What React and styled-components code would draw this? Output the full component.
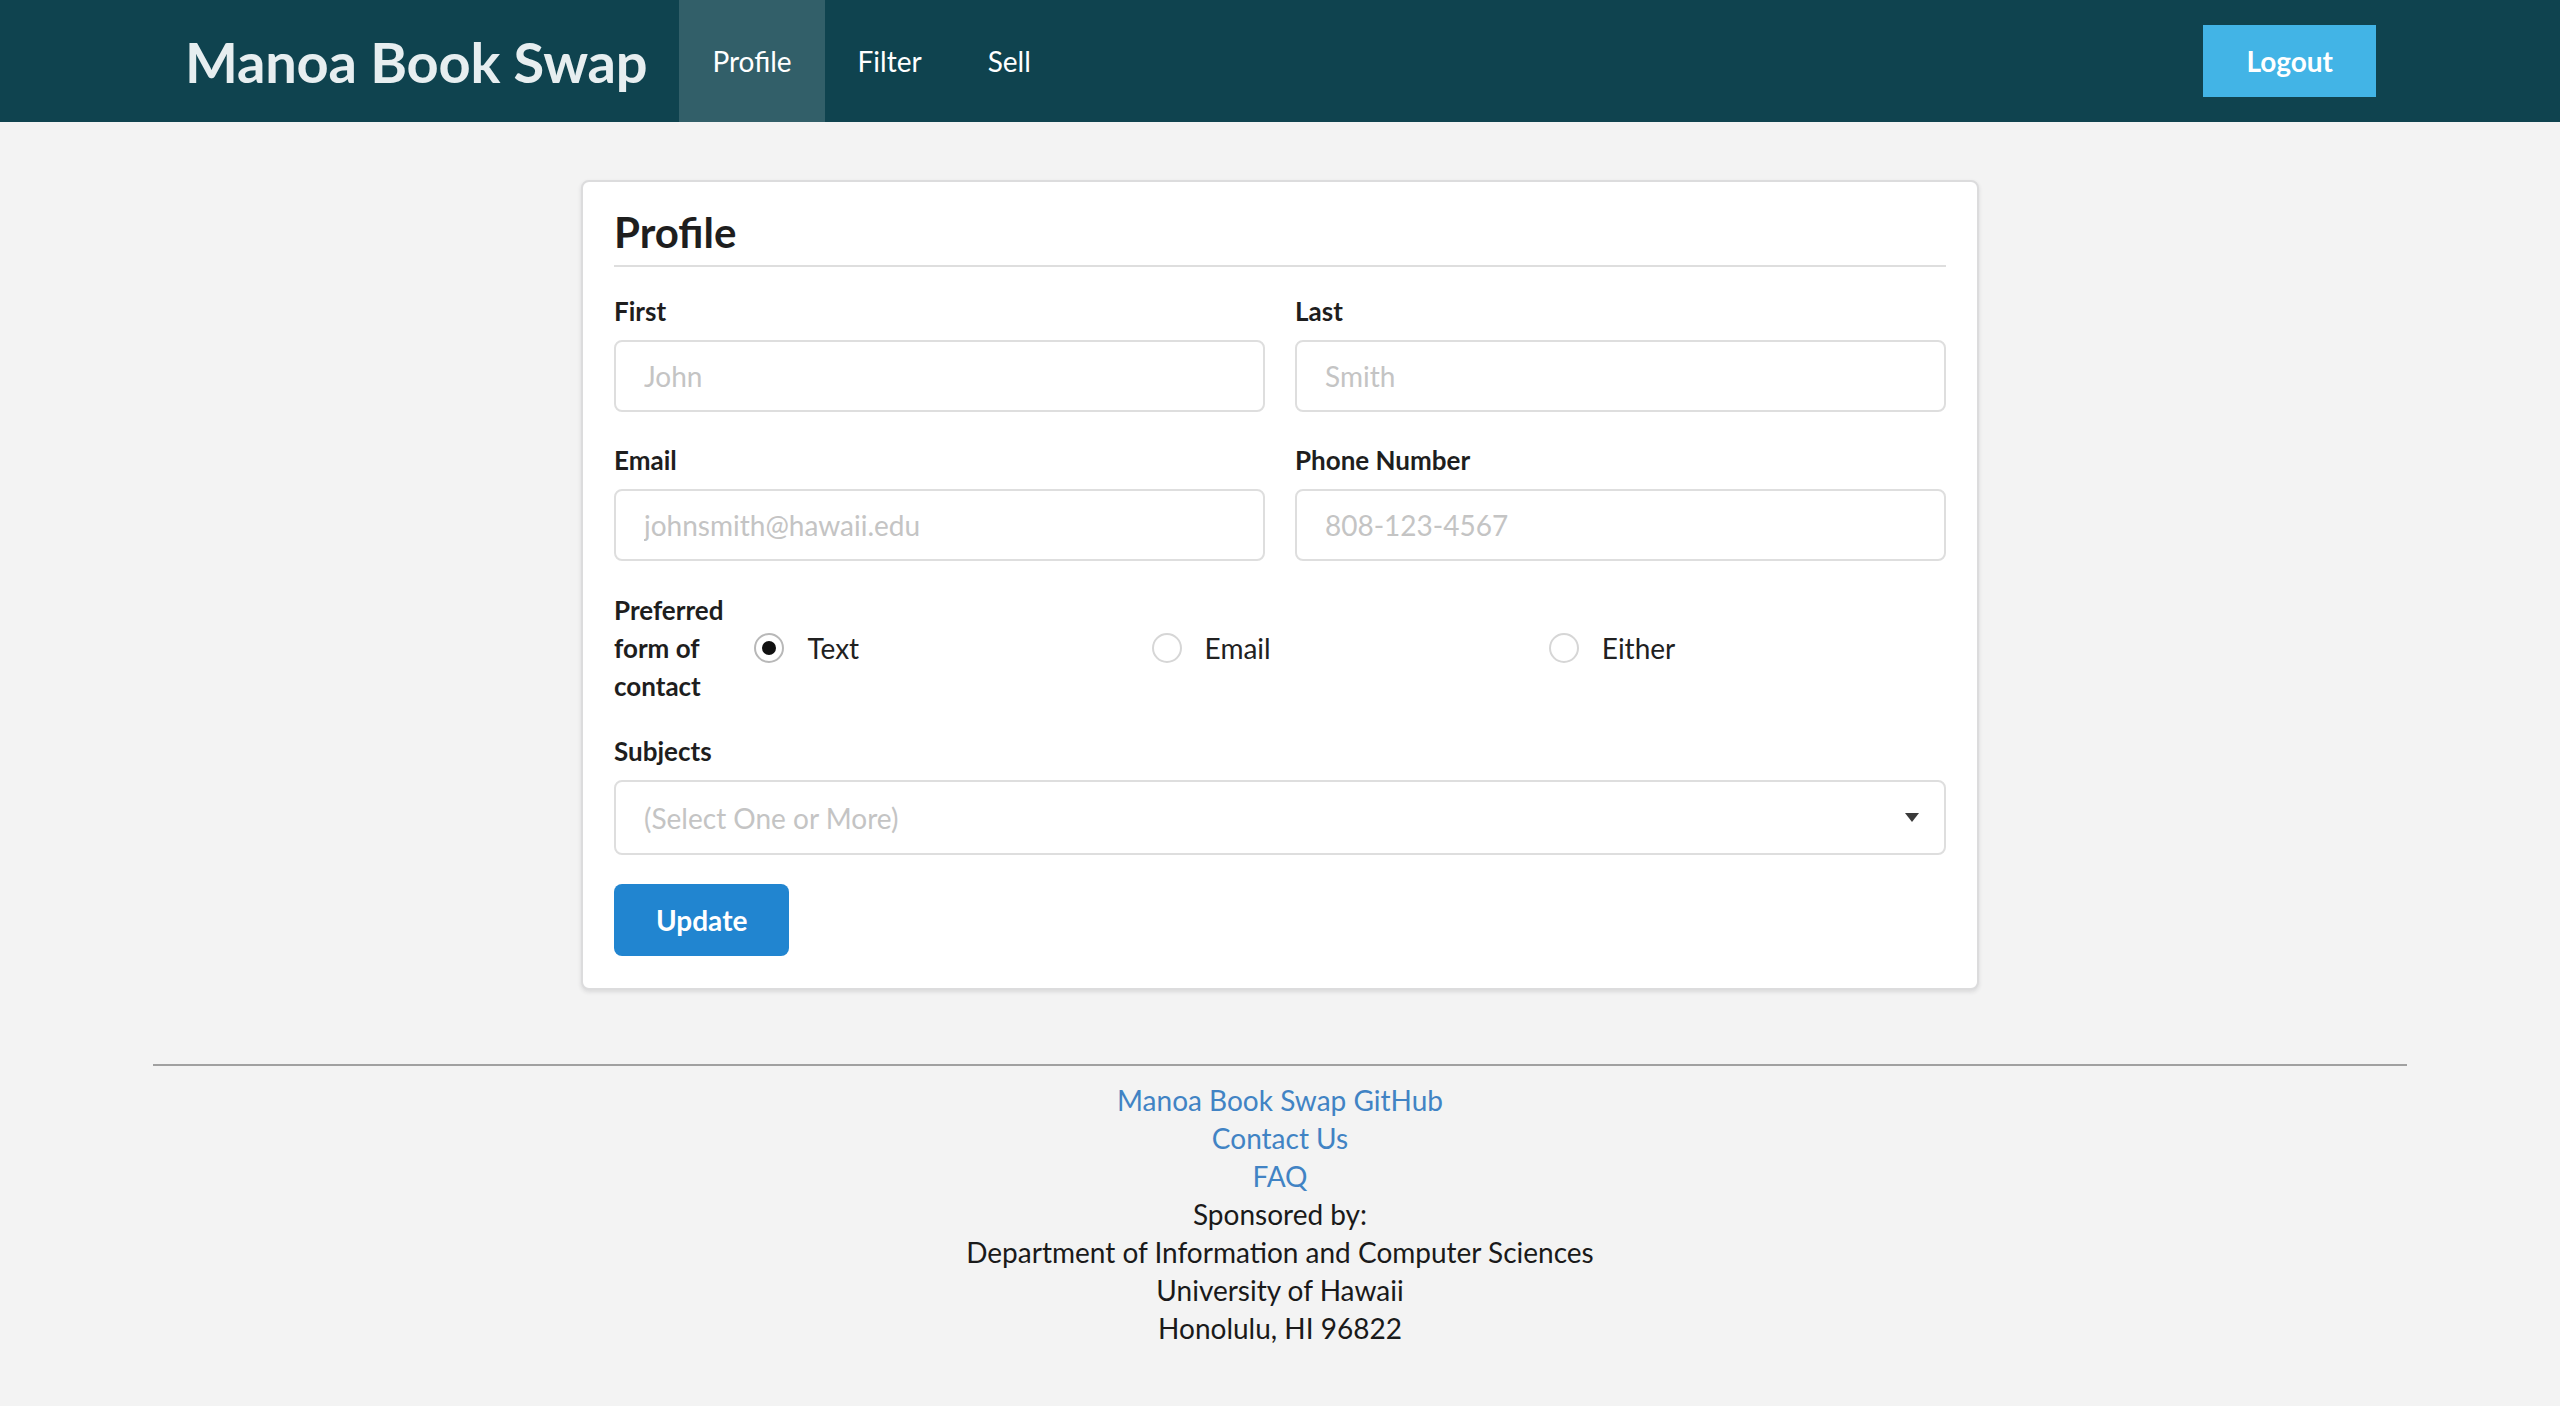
import React from 'react';
import styled, { createGlobalStyle } from 'styled-components';

const GlobalStyle = createGlobalStyle`
  body {
    margin: 0;
    background: #f3f3f3;
    font-family: Lato, "Open Sans", sans-serif;
    color: rgba(0, 0, 0, 0.87);
  }
`;

const NavBar = styled.div`
  background: #0f434f;
  height: 122px;
`;

const NavContainer = styled.div`
  width: 2254px;
  height: 100%;
  margin: 0 auto;
  display: flex;
  align-items: stretch;
`;

const Brand = styled.div`
  display: flex;
  align-items: center;
  padding: 0 32px;
  font-size: 56px;
  letter-spacing: -0.2px;
  font-weight: 700;
  color: #e7eef0;
`;

const NavItem = styled.div`
  display: flex;
  align-items: center;
  padding: 0 33px;
  font-size: 28px;
  color: #fff;
  background: ${p => (p.$active ? 'rgba(255, 255, 255, 0.15)' : 'transparent')};
`;

const NavRight = styled.div`
  margin-left: auto;
  display: flex;
  align-items: center;
  padding-right: 31px;
`;

const LogoutButton = styled.button`
  border: none;
  background: #42b4e6;
  color: #fff;
  font-family: Lato, sans-serif;
  font-weight: 700;
  font-size: 28px;
  line-height: 28px;
  padding: 22px 43px;
`;

const Main = styled.div`
  display: flex;
  justify-content: center;
  padding-top: 58px;
`;

const Card = styled.div`
  width: 1398px;
  box-sizing: border-box;
  background: #fff;
  border: 2px solid #dcdcdd;
  border-radius: 8px;
  box-shadow: 0 2px 4px rgba(34, 36, 38, 0.12);
  padding: 23px 31px 32px;
`;

const Heading = styled.h2`
  margin: 0 0 26px;
  font-size: 42px;
  line-height: 54px;
  font-weight: 700;
  color: #1e1e1e;
  padding-bottom: 6px;
  border-bottom: 2px solid #dedede;
`;

const Row = styled.div`
  display: grid;
  grid-template-columns: 1fr 1fr;
  gap: 30px;
  margin-bottom: 30px;
`;

const Field = styled.div`
  display: flex;
  flex-direction: column;
`;

const Label = styled.label`
  display: block;
  font-size: 26px;
  line-height: 37px;
  font-weight: 700;
  color: #1e1e1e;
  margin-bottom: 10px;
`;

const Input = styled.input`
  height: 72px;
  box-sizing: border-box;
  border: 2px solid #dedede;
  border-radius: 8px;
  padding: 0 28px;
  font-family: Lato, sans-serif;
  font-size: 28px;
  color: #212121;
  outline: none;
  &::placeholder {
    color: #c4c4c4;
  }
`;

const InlineRow = styled.div`
  display: flex;
  align-items: center;
  margin-bottom: 28px;
`;

const InlineLabel = styled.div`
  width: min-content;
  font-size: 26px;
  line-height: 38px;
  font-weight: 700;
  color: #1e1e1e;
  margin-right: 31px;
`;

const RadioField = styled.label`
  flex: 1;
  display: flex;
  align-items: center;
  gap: 23px;
  font-size: 28px;
  color: #212121;
`;

const RadioCircle = styled.span`
  width: 30px;
  height: 30px;
  box-sizing: border-box;
  border-radius: 50%;
  border: 2px solid ${p => (p.$checked ? '#b8b8b8' : '#d6d6d6')};
  display: flex;
  align-items: center;
  justify-content: center;
  &::after {
    content: '';
    width: 14px;
    height: 14px;
    border-radius: 50%;
    background: ${p => (p.$checked ? '#111' : 'transparent')};
  }
`;

const SelectBox = styled.div`
  height: 75px;
  box-sizing: border-box;
  border: 2px solid #dedede;
  border-radius: 8px;
  padding: 0 25px 0 28px;
  display: flex;
  align-items: center;
  justify-content: space-between;
  font-size: 28px;
  color: #c4c4c4;
  margin-bottom: 29px;
`;

const UpdateButton = styled.button`
  border: none;
  border-radius: 8px;
  background: #2185d0;
  color: #fff;
  font-family: Lato, sans-serif;
  font-weight: 700;
  font-size: 28px;
  height: 72px;
  padding: 0 42px;
`;

const Footer = styled.div`
  width: 2254px;
  margin: 74px auto 0;
  border-top: 2px solid #a0a0a0;
  padding: 15px 0 60px;
  text-align: center;
  font-size: 28px;
  line-height: 38px;
  color: #1a1a1a;
`;

const FooterLink = styled.a`
  display: block;
  color: #4183c4;
  text-decoration: none;
`;

const FooterLine = styled.div``;

const Caret = () => (
  <svg width="14" height="9" viewBox="0 0 14 9">
    <path d="M0 0 L14 0 L7 9 Z" fill="#3a3a3a" />
  </svg>
);

const contactOptions = ['Text', 'Email', 'Either'];

const App = () => {
  return (
    <>
      <GlobalStyle />
      <NavBar>
        <NavContainer>
          <Brand>Manoa Book Swap</Brand>
          <NavItem $active>Profile</NavItem>
          <NavItem>Filter</NavItem>
          <NavItem>Sell</NavItem>
          <NavRight>
            <LogoutButton>Logout</LogoutButton>
          </NavRight>
        </NavContainer>
      </NavBar>

      <Main>
        <Card>
          <Heading>Profile</Heading>
          <Row>
            <Field>
              <Label>First</Label>
              <Input placeholder="John" />
            </Field>
            <Field>
              <Label>Last</Label>
              <Input placeholder="Smith" />
            </Field>
          </Row>
          <Row>
            <Field>
              <Label>Email</Label>
              <Input placeholder="johnsmith@hawaii.edu" />
            </Field>
            <Field>
              <Label>Phone Number</Label>
              <Input placeholder="808-123-4567" />
            </Field>
          </Row>
          <InlineRow>
            <InlineLabel>Preferred form of contact</InlineLabel>
            {contactOptions.map((opt, i) => (
              <RadioField key={opt}>
                <RadioCircle $checked={i === 0} />
                {opt}
              </RadioField>
            ))}
          </InlineRow>
          <Label>Subjects</Label>
          <SelectBox>
            <span>(Select One or More)</span>
            <Caret />
          </SelectBox>
          <UpdateButton>Update</UpdateButton>
        </Card>
      </Main>

      <Footer>
        <FooterLink href="#">Manoa Book Swap GitHub</FooterLink>
        <FooterLink href="#">Contact Us</FooterLink>
        <FooterLink href="#">FAQ</FooterLink>
        <FooterLine>Sponsored by:</FooterLine>
        <FooterLine>Department of Information and Computer Sciences</FooterLine>
        <FooterLine>University of Hawaii</FooterLine>
        <FooterLine>Honolulu, HI 96822</FooterLine>
      </Footer>
    </>
  );
};

export default App;
